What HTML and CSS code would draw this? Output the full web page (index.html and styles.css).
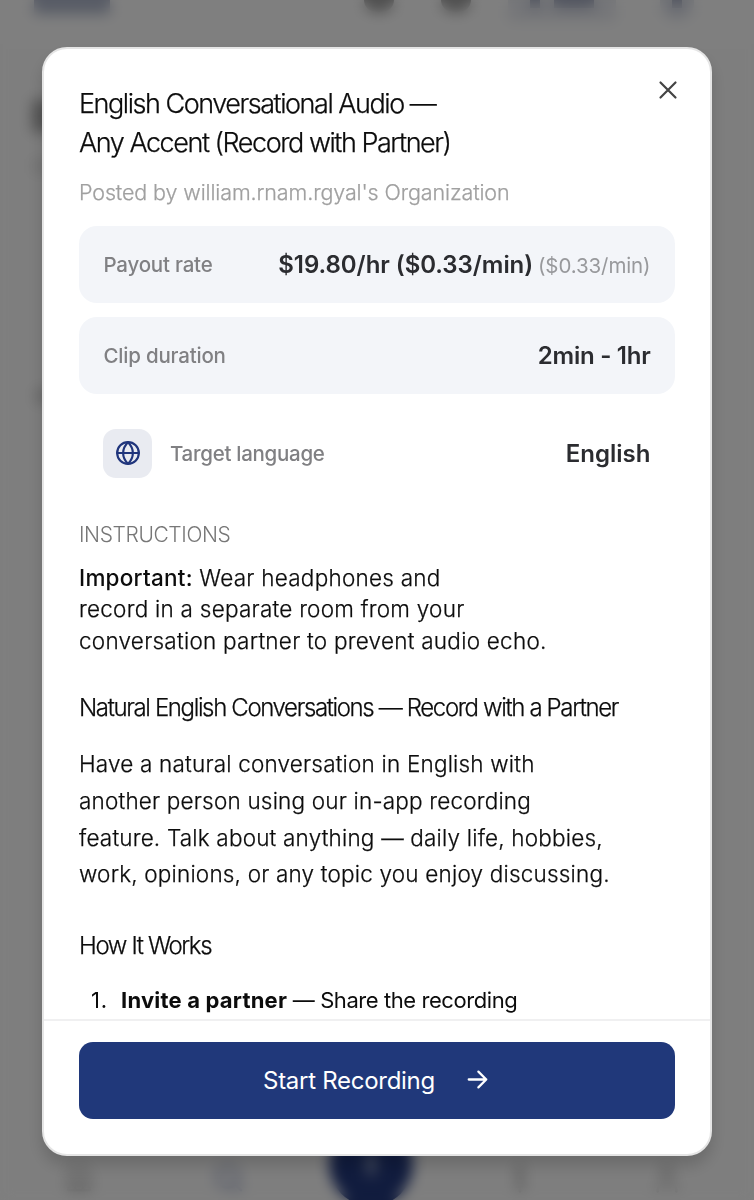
FILE: index.html
```html
<!DOCTYPE html>
<html lang="en">
<head>
    <meta charset="UTF-8">
    <meta name="viewport" content="width=device-width, initial-scale=1.0">
    <title>Start Recording</title>
    <link rel="stylesheet" href="styles.css">
</head>
<body>
    <!-- Page behind the modal -->
    <div class="app">
        <header class="app-header">
            <span class="app-logo"></span>
            <span class="app-dot"></span>
            <span class="app-dot"></span>
            <span class="app-balance"><i></i><i></i></span>
            <span class="app-avatar"><i></i></span>
        </header>
        <main class="app-main">
            <div class="app-heading"></div>
            <div class="app-subheading"></div>
            <div class="app-section"></div>
        </main>
        <nav class="app-nav">
            <svg viewBox="0 0 24 24"><path d="M4 10l8-7 8 7v11H4z"/><path d="M9 21v-7h6v7"/></svg>
            <svg class="active" viewBox="0 0 24 24"><circle cx="11" cy="11" r="8"/><path d="M17 17l4 4"/></svg>
            <span class="app-record"><i></i></span>
            <svg viewBox="0 0 24 24"><path d="M12 2v20M15 6c-6-3-8 4-3 6s3 9-3 6"/></svg>
            <svg viewBox="0 0 24 24"><circle cx="12" cy="7" r="4"/><path d="M5 22c0-10 14-10 14 0"/></svg>
        </nav>
    </div>

    <div class="overlay">
        <div class="modal">
            <button class="close-btn" aria-label="Close">
                <svg viewBox="0 0 24 24"><path d="M4.5 4.5l15 15M19.5 4.5l-15 15"/></svg>
            </button>

            <div class="modal-body">
                <h1 class="title">English Conversational Audio —<br>Any Accent (Record with Partner)</h1>
                <p class="posted">Posted by william.rnam.rgyal's Organization</p>

                <div class="info-list">
                    <div class="info-card">
                        <span class="info-label">Payout rate</span>
                        <span class="info-value"><span class="rate">$19.80/hr ($0.33/min)</span> <small>($0.33/min)</small></span>
                    </div>
                    <div class="info-card">
                        <span class="info-label">Clip duration</span>
                        <span class="info-value">2min - 1hr</span>
                    </div>
                    <div class="info-card plain">
                        <span class="info-icon">
                            <svg viewBox="0 0 24 24"><circle cx="12" cy="12" r="10"/><path d="M2 12h20M12 2c-6 6-6 14 0 20M12 2c6 6 6 14 0 20"/></svg>
                        </span>
                        <span class="info-label">Target language</span>
                        <span class="info-value">English</span>
                    </div>
                </div>

                <h2 class="section-label">INSTRUCTIONS</h2>
                <p class="important"><b>Important:</b> Wear headphones and<br>record in a separate room from your<br>conversation partner to prevent audio echo.</p>

                <h3 class="subtitle">Natural English Conversations — Record with a Partner</h3>
                <p class="description">Have a natural conversation in English with<br>another person using our in-app recording<br>feature. Talk about anything — daily life, hobbies,<br>work, opinions, or any topic you enjoy discussing.</p>

                <h3 class="subtitle how">How It Works</h3>
                <ol class="steps">
                    <li><b>Invite a partner</b> — Share the recording</li>
                </ol>
            </div>

            <div class="modal-footer">
                <button class="start-btn">
                    <span>Start Recording</span>
                    <svg viewBox="0 0 24 24"><path d="M2 12h20M13 3l9 9-9 9"/></svg>
                </button>
            </div>
        </div>
    </div>
</body>
</html>
```
FILE: styles.css
```css
* {
    box-sizing: border-box;
}

body {
    margin: 0;
    height: 1200px;
    overflow: hidden;
    font-family: Inter, "Liberation Sans", sans-serif;
    color: #0c0c0c;
    background: #fdfdfd;
}

h1, h2, h3, p, ol {
    margin: 0;
    font-weight: 300;
}

button {
    border: 0;
    padding: 0;
    font-family: inherit;
    background: none;
}

svg {
    fill: none;
    stroke: currentColor;
    stroke-width: 2;
    stroke-linecap: round;
    stroke-linejoin: round;
}

/* Page behind the modal */
.app {
    display: flex;
    flex-direction: column;
    height: 1200px;
}

.app-header {
    display: flex;
    align-items: flex-start;
    height: 44px;
    padding: 0 44px 0 34px;
    background: #fff;
}

.app-logo {
    width: 76px;
    height: 14px;
    margin-right: 254px;
    background: #b0b8cc;
}

.app-dot {
    width: 30px;
    height: 12px;
    margin-right: 47px;
    border-radius: 0 0 16px 16px;
    background: #a0a0a0;
}

.app-balance {
    display: flex;
    gap: 14px;
    width: 108px;
    height: 21px;
    margin-left: -10px;
    padding-left: 22px;
    background: #e9ebf1;
}

.app-balance i,
.app-avatar i {
    width: 10px;
    height: 8px;
    background: #a4abc0;
}

.app-balance i + i {
    width: 40px;
}

.app-avatar {
    display: flex;
    justify-content: center;
    width: 34px;
    height: 20px;
    margin-left: 44px;
    border-radius: 0 0 16px 16px;
    background: #e4e7ef;
}

.app-main {
    flex: 1;
    padding: 56px 32px;
}

.app-heading {
    width: 180px;
    height: 32px;
    background: #a8a8a8;
}

.app-subheading {
    width: 200px;
    height: 14px;
    margin-top: 27px;
    background: #e8e8e8;
}

.app-section {
    width: 120px;
    height: 14px;
    margin: 216px 0 0 3px;
    background: #d4d4d4;
}

.app-nav {
    display: grid;
    grid-template-columns: repeat(5, 147px);
    justify-items: center;
    height: 58px;
    padding-left: 3px;
    color: #b4b4b4;
}

.app-nav svg {
    width: 32px;
    height: 36px;
    margin: 18px 0 0 5px;
}

.app-nav .active {
    margin-left: 11px;
    color: #8c98c0;
}

.app-record {
    display: flex;
    align-items: center;
    justify-content: center;
    width: 84px;
    height: 84px;
    margin-top: -20px;
    border-radius: 50%;
    background: #22387c;
}

.app-record i {
    width: 10px;
    height: 22px;
    background: #8090b8;
}

/* Modal */
.overlay {
    position: fixed;
    inset: 0;
    padding: 47px 42px 44px;
    background: rgba(0, 0, 0, 0.5);
    backdrop-filter: blur(7px);
}

.modal {
    position: relative;
    display: flex;
    flex-direction: column;
    height: 100%;
    border: 2px solid #e5e5e5;
    border-radius: 25px;
    background: #fff;
    box-shadow: 0 10px 16px rgba(0, 0, 0, 0.16);
    overflow: hidden;
}

.close-btn {
    position: absolute;
    top: 29px;
    right: 30px;
    width: 24px;
    height: 24px;
    color: #444;
}

.close-btn svg {
    display: block;
    width: 24px;
    height: 24px;
    stroke-width: 2.2;
}

.modal-body {
    flex: 1;
    min-height: 0;
    padding: 36px 35px 0;
    overflow: hidden;
}

/* Thickens the light weight a little */
.title,
.posted,
.subtitle,
.important,
.description {
    -webkit-text-stroke: 0.25px currentColor;
}

.title {
    font-size: 27px;
    line-height: 38.5px;
    letter-spacing: -1.46px;
}

.posted {
    margin-top: 14px;
    font-size: 21.5px;
    line-height: 32px;
    letter-spacing: -0.12px;
    color: #a0a0a0;
}

.info-list {
    display: flex;
    flex-direction: column;
    gap: 14px;
    margin-top: 18px;
}

.info-card {
    display: flex;
    align-items: center;
    height: 77px;
    padding: 0 24.5px;
    border-radius: 18px;
    background: #f3f5f9;
}

.info-card.plain {
    height: 90px;
    padding-left: 24px;
    background: none;
}

.info-label {
    font-size: 20.5px;
    font-weight: 500;
    letter-spacing: -0.2px;
    color: #808083;
}

.plain .info-label {
    letter-spacing: -0.28px;
}

.info-value {
    margin-left: auto;
    font-size: 24px;
    font-weight: 600;
    letter-spacing: -0.25px;
    color: #2b2c30;
}

.plain .info-value {
    letter-spacing: 0;
}

.rate {
    letter-spacing: -0.05px;
}

.info-value small {
    margin-left: -1px;
    font-size: 20.5px;
    font-weight: 400;
    letter-spacing: -0.1px;
    color: #98999c;
}

.info-icon {
    display: flex;
    align-items: center;
    justify-content: center;
    width: 49px;
    height: 49px;
    margin-right: 18px;
    border-radius: 13px;
    color: #20357c;
    background: #e9ebf1;
}

.info-icon svg {
    width: 26px;
    height: 26px;
}

.section-label {
    margin-top: 21.5px;
    font-size: 21px;
    line-height: 30px;
    letter-spacing: -0.4px;
    color: #777;
}

.important {
    margin-top: 12px;
    font-size: 22.5px;
    line-height: 31.5px;
    letter-spacing: 0.25px;
}

.important b {
    font-weight: 500;
    -webkit-text-stroke: 0;
}

.subtitle {
    margin-top: 37px;
    font-size: 24px;
    line-height: 30px;
    letter-spacing: -1.37px;
}

.description {
    margin-top: 23px;
    font-size: 22.5px;
    line-height: 36.8px;
    letter-spacing: 0.19px;
}

.how {
    margin-top: 38px;
}

.steps {
    margin-top: 21px;
    padding-left: 12px;
    font-size: 22px;
    font-weight: 400;
    line-height: 36px;
    letter-spacing: -0.43px;
    list-style: none;
    counter-reset: step;
}

.steps li::before {
    counter-increment: step;
    content: counter(step) ".";
    display: inline-block;
    width: 30px;
    letter-spacing: 0.8px;
}

.steps b {
    font-weight: 700;
    letter-spacing: 0.2px;
}

.modal-footer {
    height: 135px;
    padding: 21px 35px 0;
    border-top: 2px solid #f0f0f1;
}

.start-btn {
    display: flex;
    align-items: center;
    justify-content: center;
    gap: 32px;
    width: 100%;
    height: 77px;
    padding-right: 3px;
    border-radius: 14px;
    font-size: 24px;
    font-weight: 400;
    letter-spacing: -0.28px;
    color: #fff;
    background: #20387a;
}

.start-btn svg {
    width: 21px;
    height: 21px;
    margin-top: -2px;
    stroke-width: 2.6;
}
```
